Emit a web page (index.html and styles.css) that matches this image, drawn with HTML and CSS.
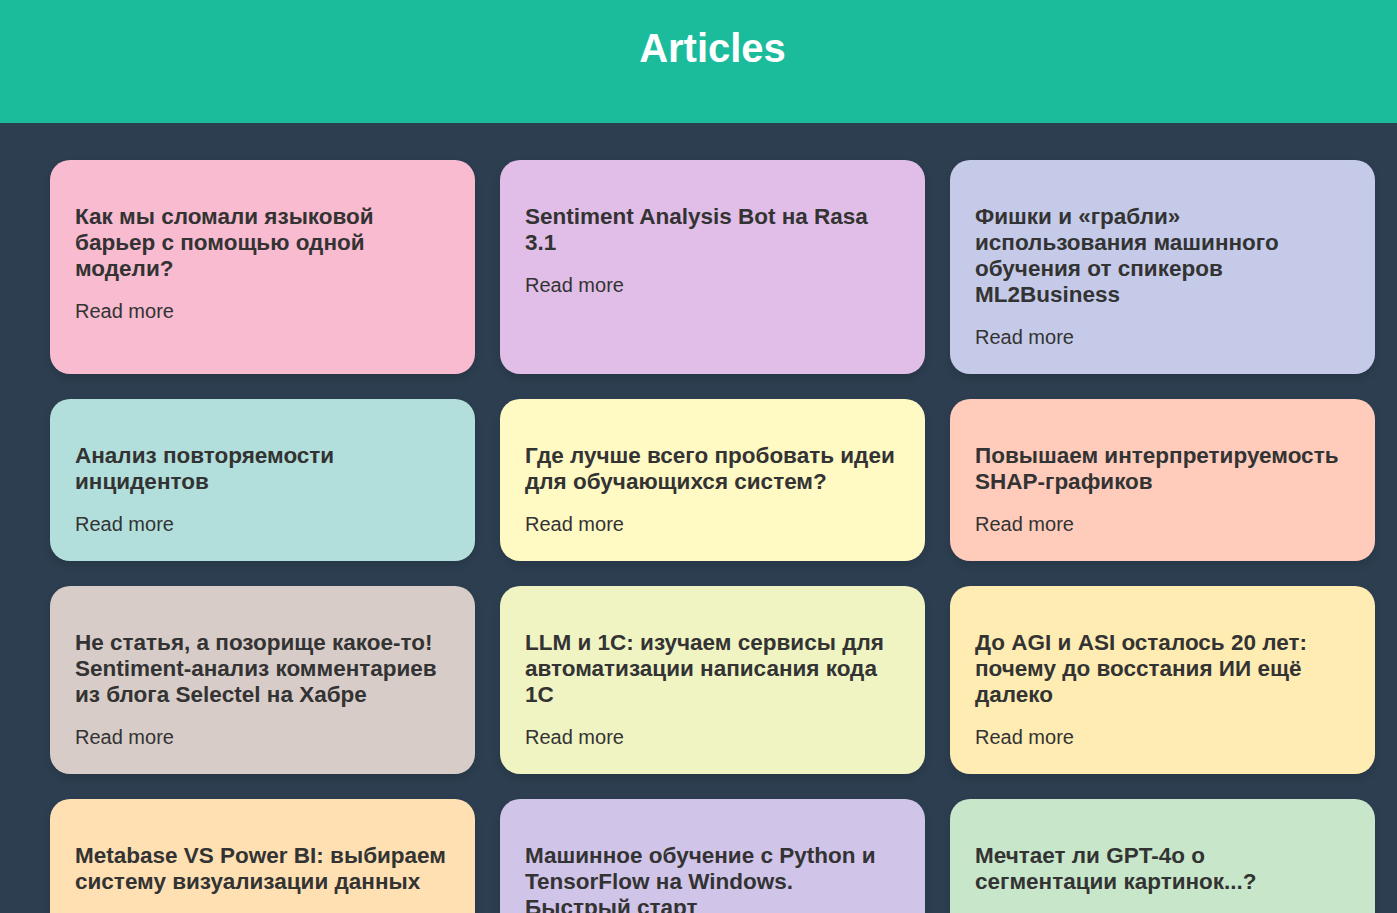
FILE: index.html
```html
<!DOCTYPE html>
<html lang="ru">
<head>
<meta charset="utf-8">
<title>Articles</title>
<link rel="stylesheet" href="styles.css">
</head>
<body>
<div class="page">
  <header class="site-header">
    <h1 class="site-title">Articles</h1>
  </header>
  <main class="grid">
    <article class="card c-pink">
      <h2 class="card-title">Как мы сломали языковой барьер с помощью одной модели?</h2>
      <a class="card-link" href="#">Read more</a>
    </article>
    <article class="card c-purple">
      <h2 class="card-title">Sentiment Analysis Bot на Rasa 3.1</h2>
      <a class="card-link" href="#">Read more</a>
    </article>
    <article class="card c-indigo">
      <h2 class="card-title">Фишки и «грабли» использования машинного обучения от спикеров ML2Business</h2>
      <a class="card-link" href="#">Read more</a>
    </article>
    <article class="card c-teal">
      <h2 class="card-title">Анализ повторяемости инцидентов</h2>
      <a class="card-link" href="#">Read more</a>
    </article>
    <article class="card c-yellow">
      <h2 class="card-title">Где лучше всего пробовать идеи для обучающихся систем?</h2>
      <a class="card-link" href="#">Read more</a>
    </article>
    <article class="card c-peach">
      <h2 class="card-title">Повышаем интерпретируемость SHAP-графиков</h2>
      <a class="card-link" href="#">Read more</a>
    </article>
    <article class="card c-brown">
      <h2 class="card-title">Не статья, а позорище какое-то! Sentiment-анализ комментариев из блога Selectel на Хабре</h2>
      <a class="card-link" href="#">Read more</a>
    </article>
    <article class="card c-lime">
      <h2 class="card-title">LLM и 1С: изучаем сервисы для автоматизации написания кода 1С</h2>
      <a class="card-link" href="#">Read more</a>
    </article>
    <article class="card c-amber">
      <h2 class="card-title">До AGI и ASI осталось 20 лет: почему до восстания ИИ ещё далеко</h2>
      <a class="card-link" href="#">Read more</a>
    </article>
    <article class="card c-orange">
      <h2 class="card-title">Metabase VS Power BI: выбираем систему визуализации данных</h2>
      <a class="card-link" href="#">Read more</a>
    </article>
    <article class="card c-dpurple">
      <h2 class="card-title">Машинное обучение с Python и TensorFlow на Windows. Быстрый старт</h2>
      <a class="card-link" href="#">Read more</a>
    </article>
    <article class="card c-green">
      <h2 class="card-title">Мечтает ли GPT-4o о сегментации картинок...?</h2>
      <a class="card-link" href="#">Read more</a>
    </article>
  </main>
</div>
</body>
</html>
```
FILE: styles.css
```css
html, body {
  margin: 0;
  padding: 0;
  background: #2c3e50;
  font-family: "Liberation Sans", Arial, sans-serif;
}

.page {
  width: 1425px;
}

.site-header {
  background: #1abc9c;
  padding: 25px 0 52px;
  text-align: center;
}

.site-title {
  margin: 0;
  color: #ffffff;
  font-size: 40px;
  line-height: 46px;
  font-weight: bold;
}

.grid {
  display: grid;
  grid-template-columns: repeat(3, 425px);
  gap: 25px;
  padding: 37px 50px 40px;
}

.card {
  border-radius: 20px;
  padding: 44px 25px 25px;
  box-shadow: 0 4px 8px rgba(0, 0, 0, 0.12);
  color: #333333;
}

.card-title {
  margin: 0 0 18px;
  font-size: 22.5px;
  line-height: 26px;
  font-weight: bold;
  color: #333333;
}

.card-link {
  display: block;
  font-size: 20px;
  line-height: 23px;
  color: #333333;
  text-decoration: none;
}

.c-pink { background: #f8bbd0; }
.c-purple { background: #e1bee7; }
.c-indigo { background: #c5cae9; }
.c-teal { background: #b2dfdb; }
.c-yellow { background: #fff9c4; }
.c-peach { background: #ffccbc; }
.c-brown { background: #d7ccc8; }
.c-lime { background: #f0f4c3; }
.c-amber { background: #ffecb3; }
.c-orange { background: #ffe0b2; }
.c-dpurple { background: #d1c4e9; }
.c-green { background: #c8e6c9; }
```
